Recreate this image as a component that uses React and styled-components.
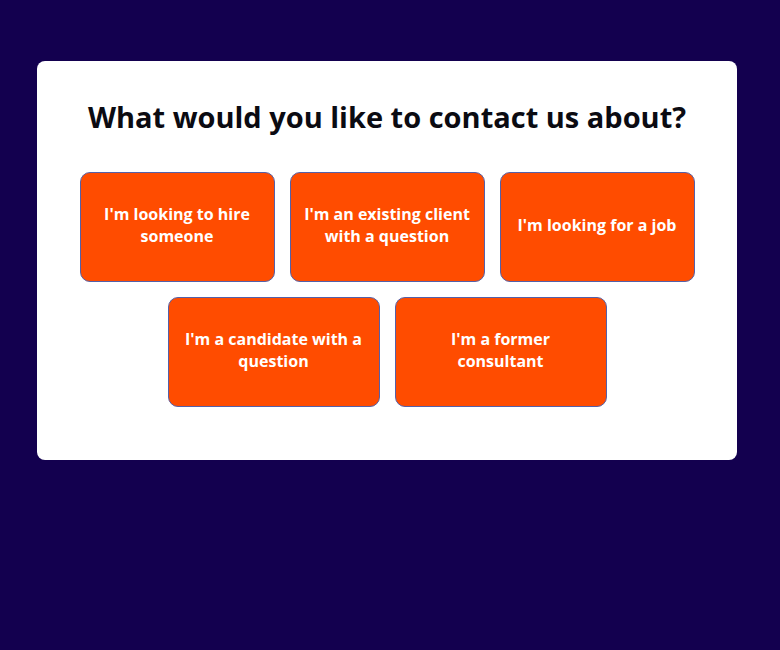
import React from "react";
import styled, { createGlobalStyle } from "styled-components";

const GlobalStyle = createGlobalStyle`
  html, body {
    margin: 0;
    padding: 0;
    background: #13004f;
    font-family: "Open Sans", "Noto Sans", sans-serif;
  }
`;

const topics = [
  ["I'm looking to hire someone", "I'm an existing client with a question", "I'm looking for a job"],
  ["I'm a candidate with a question", "I'm a former consultant"]
];

const App = () => {
  return (
    <Page>
      <GlobalStyle />
      <Card>
        <Title>What would you like to contact us about?</Title>
        <Options>
          {topics.map((row, i) => (
            <Row key={i}>
              {row.map((label) => (
                <Option key={label} wide={i === 1}>
                  {label}
                </Option>
              ))}
            </Row>
          ))}
        </Options>
      </Card>
    </Page>
  );
};

export default App;

const Page = styled.div`
  min-height: 650px;
  padding: 61px 0 0 37px;
  box-sizing: border-box;
`;

const Card = styled.div`
  width: 700px;
  box-sizing: border-box;
  background: #ffffff;
  border-radius: 8px;
  padding: 34px 42px 53px;
`;

const Title = styled.h1`
  margin: 0 0 33px;
  text-align: center;
  font-size: 29px;
  line-height: 44px;
  font-weight: 700;
  color: #0b0b12;
`;

const Options = styled.div`
  display: flex;
  flex-direction: column;
  gap: 15px;
`;

const Row = styled.div`
  display: flex;
  justify-content: center;
  gap: 15px;
`;

const Option = styled.button`
  width: ${(props) => (props.wide ? "212px" : "195px")};
  height: 110px;
  box-sizing: border-box;
  padding: 0 ${(props) => (props.wide ? "14px" : "12px")} 4px;
  background: #ff4c00;
  border: 1px solid #5560a8;
  border-radius: 10px;
  color: #ffffff;
  font-family: "Open Sans", "Noto Sans", sans-serif;
  font-size: 16px;
  font-weight: 700;
  line-height: 22px;
  cursor: pointer;
`;
